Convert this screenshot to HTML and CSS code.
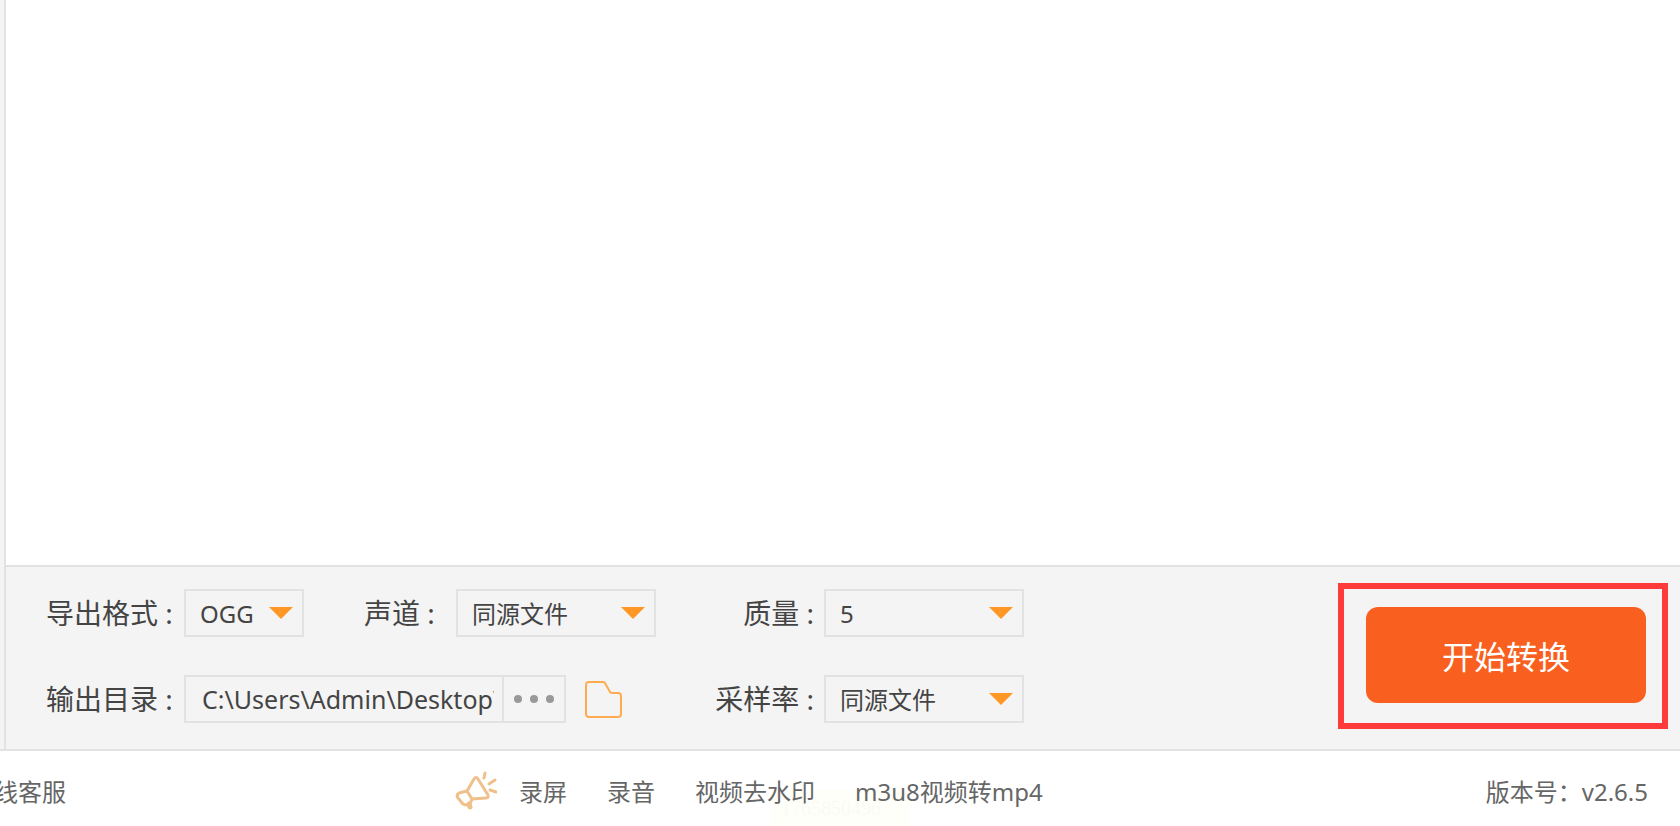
FILE: index.html
```html
<!DOCTYPE html>
<html lang="zh-CN">
  <head>
    <meta charset="UTF-8" />
    <meta name="viewport" content="width=device-width, initial-scale=1.0" />
    <title>格式转换</title>
    <link rel="stylesheet" href="styles.css">
  </head>
  <body>
    <main class="window">
      <div class="file-list"></div>
      <form class="settings">
        <div class="fields">
          <label for="format">导出格式 :</label>
          <div class="group">
            <div class="dropdown small">
              <select id="format"><option>OGG</option></select>
            </div>
            <label class="channel-label" for="channel">声道 :</label>
            <div class="dropdown">
              <select id="channel"><option>同源文件</option></select>
            </div>
          </div>
          <label class="right" for="quality">质量 :</label>
          <div class="dropdown">
            <select id="quality"><option>5</option></select>
          </div>

          <label for="output">输出目录 :</label>
          <div class="group">
            <div class="path">
              <input id="output" type="text" value="C:\Users\Admin\Desktop\" />
              <button class="browse" type="button" aria-label="浏览">
                <span class="dot"></span><span class="dot"></span><span class="dot"></span>
              </button>
            </div>
            <button class="folder" type="button" aria-label="打开文件夹">
              <svg width="37" height="37" viewBox="0 0 37 37" fill="none" stroke="#ffac50" stroke-width="2" stroke-linejoin="round">
                <path d="M4 1H18Q19 1 20 2L25 11Q26 12 27 12H33Q36 12 36 15V33Q36 36 33 36H4Q1 36 1 33V4Q1 1 4 1Z" />
              </svg>
            </button>
          </div>
          <label class="right" for="rate">采样率 :</label>
          <div class="dropdown">
            <select id="rate"><option>同源文件</option></select>
          </div>
        </div>
        <div class="highlight">
          <button class="start" type="button">开始转换</button>
        </div>
      </form>
    </main>

    <footer class="footer">
      <a class="service" href="#">在线客服</a>
      <nav class="links">
        <svg class="horn" width="42" height="40" viewBox="0 0 42 40" fill="none" stroke="#efc08a" stroke-width="3" stroke-linecap="round" stroke-linejoin="round">
          <path d="M12 20L19 8Q21 5 23 8L33 24Q34 27 31 27L17 28" />
          <path d="M12 20L17 28L15 33Q12 35 8 33L3 27Q1 24 4 22Z" />
          <path d="M14 33L15 36" stroke-width="5" />
          <path d="M29 7L30 2M34 13L40 9M35 19L41 21" />
        </svg>
        <a href="#">录屏</a>
        <a href="#">录音</a>
        <a href="#">视频去水印</a>
        <a href="#">m3u8视频转mp4</a>
      </nav>
      <span class="version">版本号：v2.6.5</span>
      <span class="stamp">1765850496</span>
    </footer>
  </body>
</html>
```
FILE: styles.css
```css
* {
  box-sizing: border-box;
}
body {
  margin: 0;
  height: 100vh;
  display: flex;
  flex-direction: column;
  overflow: hidden;
  background-color: white;
  color: #444;
  font-family: "Noto Sans", "Noto Sans CJK SC", sans-serif;
}
button,
input,
select {
  font-family: inherit;
  color: inherit;
}
.window {
  flex: 1;
  display: flex;
  flex-direction: column;
  margin-left: 4px;
  border-left: 2px solid #e2e2e2;
  box-shadow: -4px 0 #f4f4f4;
}
.file-list {
  flex: 1;
}

/* settings bar */
.settings {
  display: flex;
  justify-content: space-between;
  align-items: flex-start;
  padding: 16px 12px 20px 40px;
  border-top: 2px solid #e2e2e2;
  background-color: #f4f4f4;
}
.fields {
  display: grid;
  grid-template-columns: 138px 472px 168px 200px;
  row-gap: 38px;
  align-items: center;
  padding-top: 6px;
}
.fields label {
  font-size: 28px;
  line-height: 48px;
  white-space: nowrap;
}
.fields .right {
  padding-right: 10px;
  text-align: right;
}
.group {
  display: flex;
  align-items: center;
}
.fields .channel-label {
  margin: 0 auto 0 60px;
}
.dropdown {
  position: relative;
  width: 200px;
}
.dropdown.small {
  width: 120px;
}
.dropdown::after {
  content: "";
  position: absolute;
  top: 18px;
  right: 11px;
  border: 12px solid transparent;
  border-top-color: #ff9724;
  border-bottom: 0;
  pointer-events: none;
}
.dropdown select {
  display: block;
  appearance: none;
  width: 100%;
  height: 48px;
  padding: 0 14px;
  border: 2px solid #e2e2e2;
  border-radius: 0;
  background: none;
  font-size: 24px;
}
.path {
  display: flex;
  width: 382px;
  height: 48px;
  border: 2px solid #e2e2e2;
}
.path input {
  flex: 1;
  min-width: 0;
  margin: 0 8px 0 16px;
  padding: 0;
  border: 0;
  background: none;
  font-size: 25px;
}
.browse {
  display: flex;
  justify-content: center;
  align-items: center;
  gap: 8px;
  width: 62px;
  padding: 0;
  border: 0;
  border-left: 2px solid #e2e2e2;
  background: none;
}
.dot {
  width: 8px;
  height: 8px;
  border-radius: 50%;
  background-color: #999;
}
.folder {
  margin-left: 19px;
  padding: 0;
  border: 0;
  background: none;
}
.folder svg {
  display: block;
}
.highlight {
  padding: 18px 16px 20px 22px;
  border: 6px solid #fe3a3a;
}
.start {
  display: block;
  width: 280px;
  height: 96px;
  padding: 0;
  border: 0;
  border-radius: 12px;
  background-color: #f9601f;
  color: white;
  font-size: 32px;
}

/* bottom bar */
.footer {
  position: relative;
  display: flex;
  align-items: center;
  height: 77px;
  padding: 4px 32px 0 0;
  border-top: 2px solid #e2e2e2;
  color: #666;
  font-size: 24px;
  white-space: nowrap;
}
.footer a {
  color: inherit;
  text-decoration: none;
}
.service {
  margin-left: -30px;
}
.links {
  display: flex;
  align-items: center;
  gap: 40px;
  margin-left: 389px;
}
.horn {
  margin-right: -18px;
}
.version {
  margin-left: auto;
}
.stamp {
  position: absolute;
  z-index: -1;
  left: 771px;
  bottom: 0;
  width: 138px;
  height: 36px;
  padding-left: 10px;
  background-color: #fffffa;
  color: #fafaf5;
  font-family: "Liberation Serif", serif;
  font-size: 20px;
  line-height: 36px;
}
```
